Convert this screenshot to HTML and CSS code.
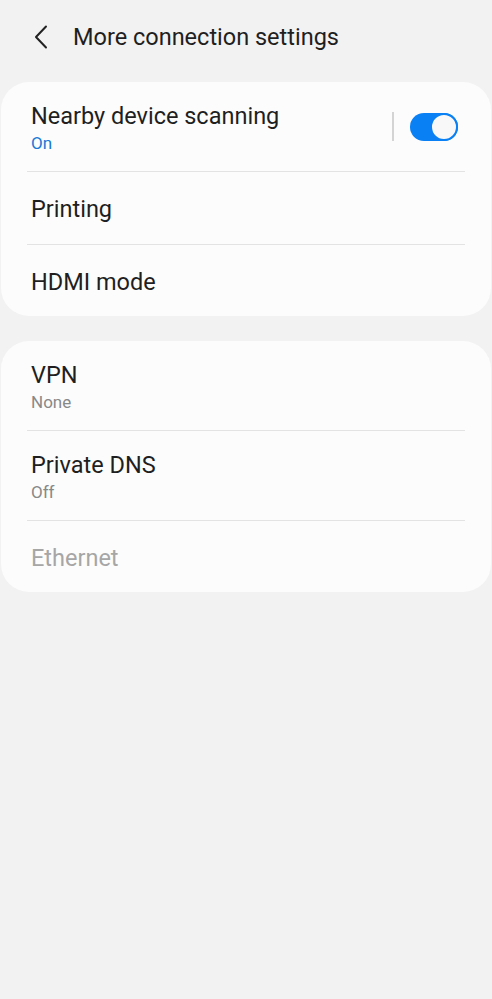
FILE: index.html
```html
<!DOCTYPE html>
<html lang="en">
<head>
  <meta charset="UTF-8">
  <meta name="viewport" content="width=device-width, initial-scale=1.0">
  <title>More connection settings</title>
  <link rel="stylesheet" href="styles.css">
</head>
<body>
  <div class="header">
    <svg class="back" width="14" height="24" viewBox="0 0 14 24">
      <path d="M12 1.5 L2 12 L12 22.5" fill="none" stroke="#222" stroke-width="2" stroke-linecap="round" stroke-linejoin="round"/>
    </svg>
    <h1>More connection settings</h1>
  </div>

  <div class="card">
    <div class="row tall">
      <div class="text">
        <div class="title">Nearby device scanning</div>
        <div class="sub on">On</div>
      </div>
      <div class="bar"></div>
      <div class="toggle"><div class="thumb"></div></div>
    </div>
    <div class="row">
      <div class="text"><div class="title">Printing</div></div>
    </div>
    <div class="row">
      <div class="text"><div class="title">HDMI mode</div></div>
    </div>
  </div>

  <div class="card">
    <div class="row tall">
      <div class="text">
        <div class="title">VPN</div>
        <div class="sub">None</div>
      </div>
    </div>
    <div class="row tall">
      <div class="text">
        <div class="title">Private DNS</div>
        <div class="sub">Off</div>
      </div>
    </div>
    <div class="row">
      <div class="text"><div class="title disabled">Ethernet</div></div>
    </div>
  </div>
</body>
</html>
```

FILE: styles.css
```css
body {
  font-family: Roboto, "Noto Sans", sans-serif;
  background-color: #f2f2f2;
  margin: 0;
  color: #1f1f1f;
}

.header {
  display: flex;
  align-items: center;
  height: 74px;
  padding-left: 34px;
  box-sizing: border-box;
}

.back {
  display: block;
}

h1 {
  font-size: 23.5px;
  font-weight: 400;
  margin: 0 0 0 25px;
}

.card {
  background-color: #fcfcfc;
  border-radius: 28px;
  margin: 8px 1px 25px;
  padding: 0 26px;
}

.row {
  display: flex;
  align-items: center;
  height: 72px;
  border-bottom: 1px solid #e3e3e3;
}

.row:last-child {
  border-bottom: none;
  height: 71px;
}

.row.tall {
  height: 89px;
}

.text {
  flex: 1;
  padding: 2px 0 0 4px;
}

.title {
  font-size: 23.5px;
  line-height: 28px;
}

.title.disabled {
  color: #a6a6a6;
}

.sub {
  font-size: 17px;
  line-height: 22px;
  margin-top: 2px;
  color: #888;
}

.sub.on {
  color: #1a78d6;
}

.bar {
  width: 2px;
  height: 29px;
  background-color: #d4d4d4;
  margin-right: 16px;
}

.toggle {
  width: 48px;
  height: 28px;
  border-radius: 14px;
  background-color: #0a80f5;
  display: flex;
  justify-content: flex-end;
  margin-right: 7px;
}

.thumb {
  width: 24px;
  height: 24px;
  border-radius: 50%;
  background-color: #f8f8f8;
  border: 2px solid #0a80f5;
}
```
